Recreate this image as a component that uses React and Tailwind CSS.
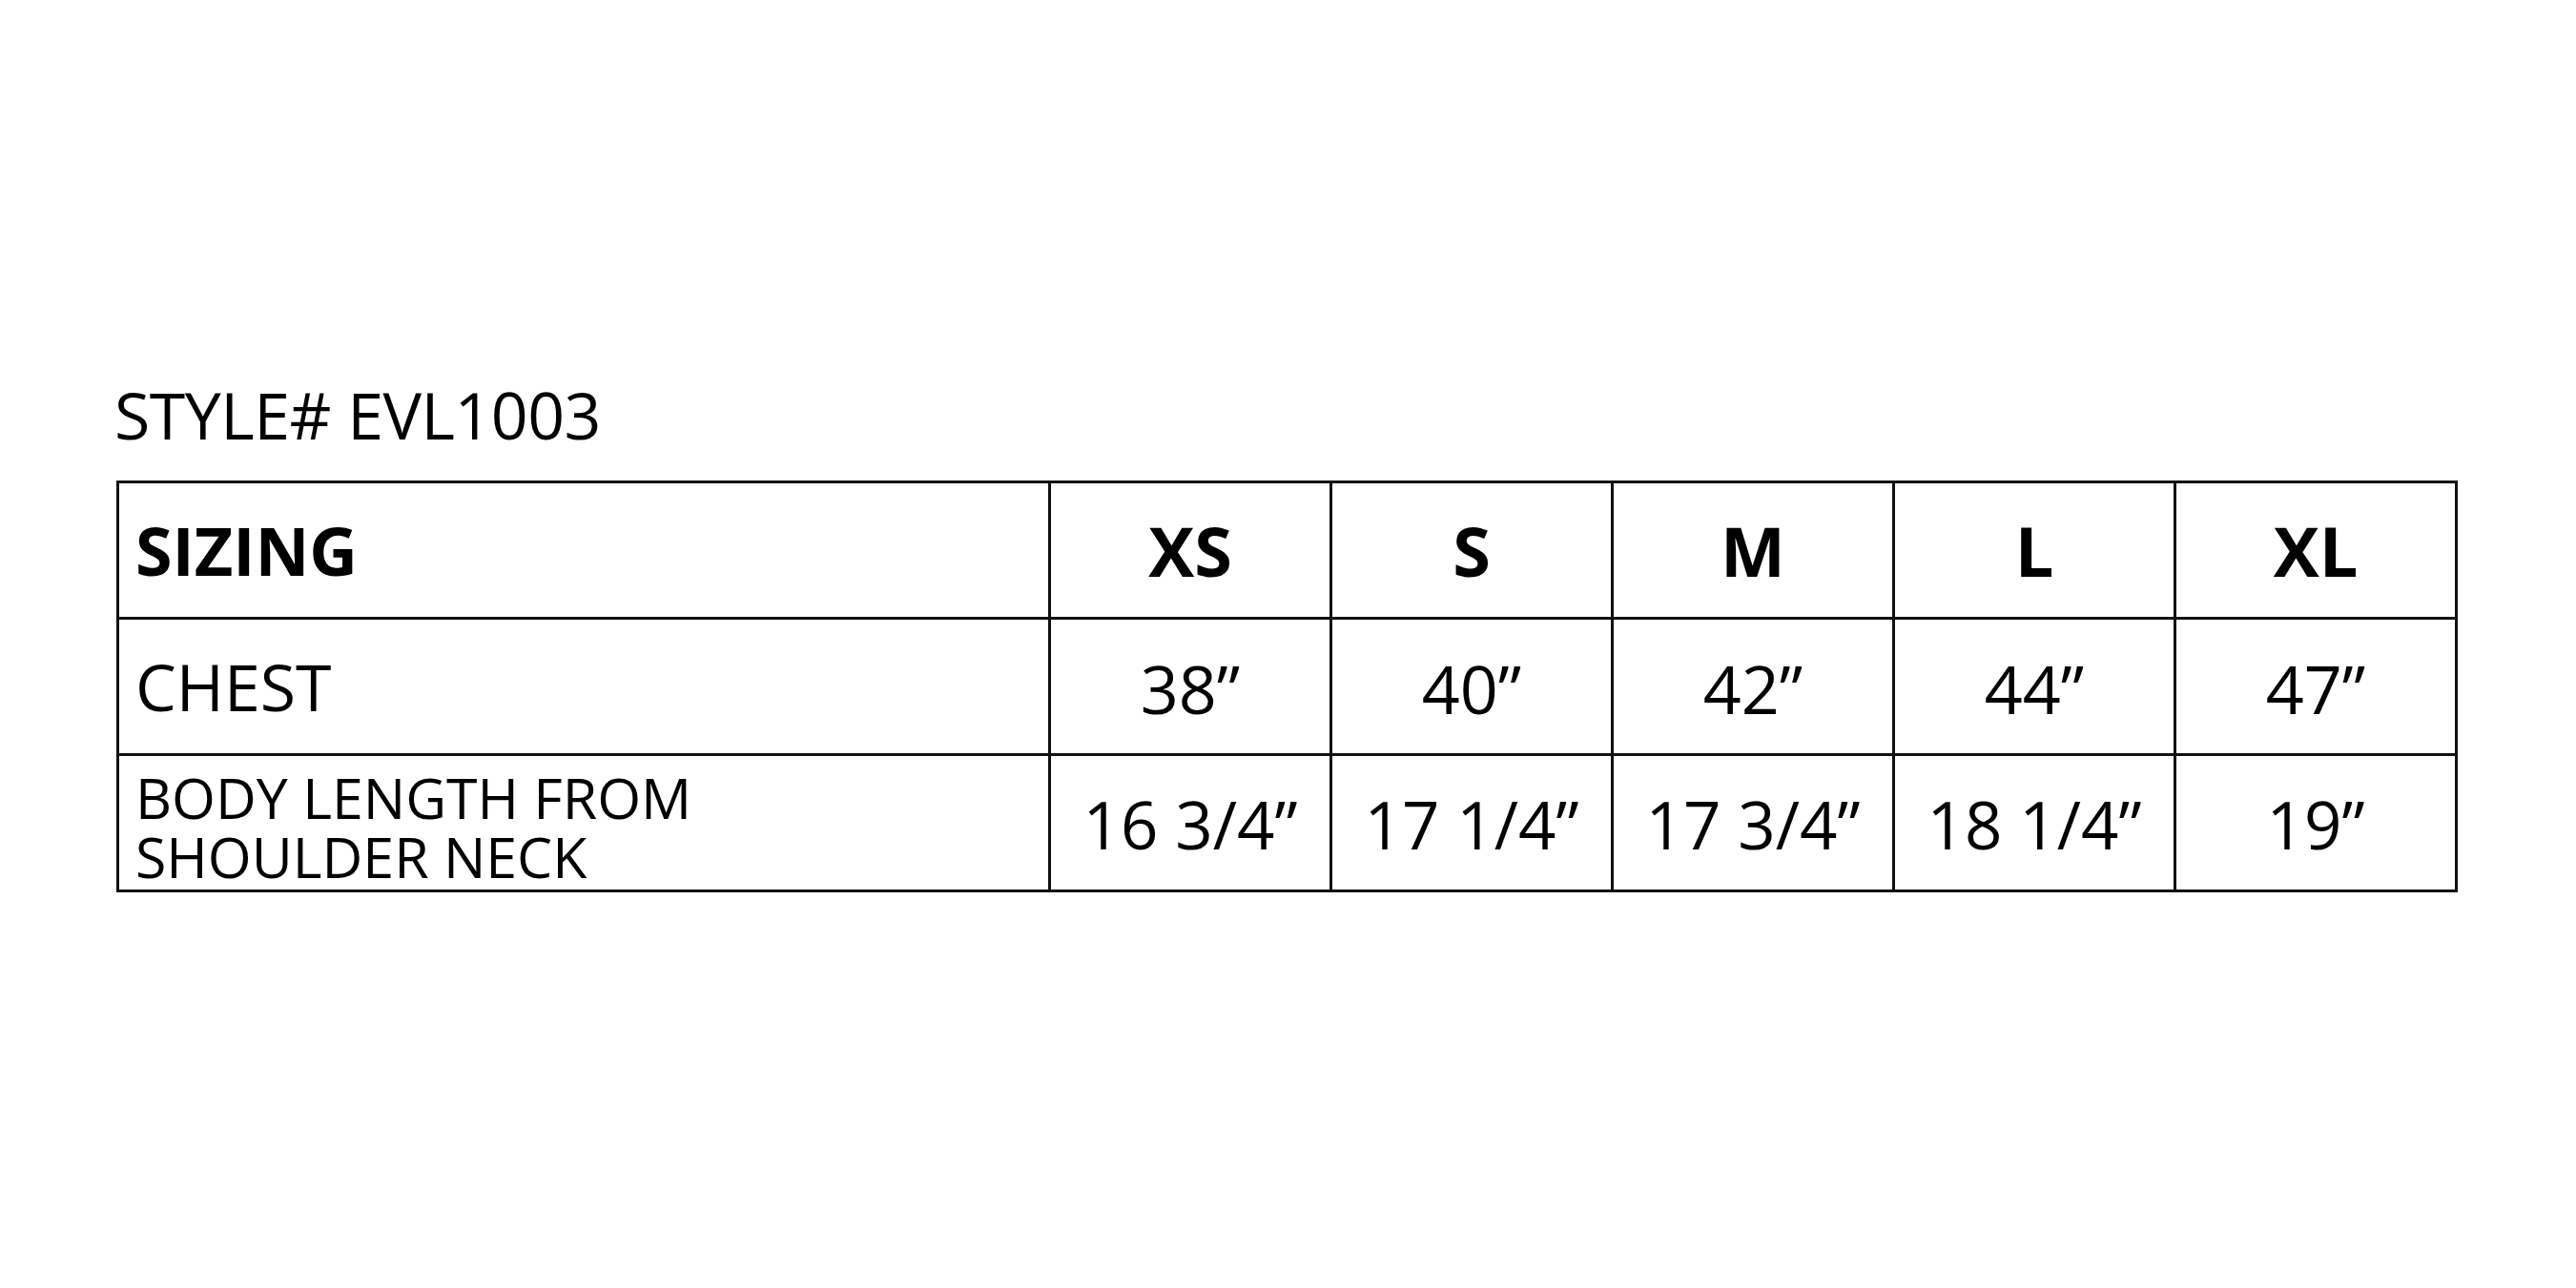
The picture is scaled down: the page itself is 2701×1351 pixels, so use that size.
const sizes = ["XS", "S", "M", "L", "XL"];
const chest = ["38”", "40”", "42”", "44”", "47”"];
const body = ["16 3/4”", "17 1/4”", "17 3/4”", "18 1/4”", "19”"];

function Cell({ children, first }) {
  return (
    <div
      className={
        "h-[143px] border-r-[3px] border-b-[3px] border-[#111] flex items-center " +
        (first ? "w-[977px] pl-[17px] justify-start" : "w-[295px] justify-center")
      }
    >
      {children}
    </div>
  );
}

export default function App() {
  return (
    <div className="bg-white w-[2701px] h-[1351px] pl-[122px] pt-[401px] text-black font-['Open_Sans',sans-serif]">
      <h1 className="text-[68px] leading-none font-normal tracking-[-0.5px] mb-[35px] ml-[-2px]">STYLE# EVL1003</h1>
      <div className="w-max border-l-[3px] border-t-[3px] border-[#111]">
        <div className="flex">
          <Cell first>
            <span className="text-[70px] leading-none font-bold">SIZING</span>
          </Cell>
          {sizes.map((s) => (
            <Cell key={s}>
              <span className="text-[72px] leading-none font-bold">{s}</span>
            </Cell>
          ))}
        </div>
        <div className="flex">
          <Cell first>
            <span className="text-[68px] leading-none">CHEST</span>
          </Cell>
          {chest.map((c, i) => (
            <Cell key={i}>
              <span className="text-[70px] leading-none pt-[4px]">{c}</span>
            </Cell>
          ))}
        </div>
        <div className="flex">
          <Cell first>
            <span className="text-[59px] leading-[62px] pt-[8px]">
              BODY LENGTH FROM
              <br />
              SHOULDER NECK
            </span>
          </Cell>
          {body.map((b, i) => (
            <Cell key={i}>
              <span className="text-[69px] leading-none pt-[3px]">{b}</span>
            </Cell>
          ))}
        </div>
      </div>
    </div>
  );
}
